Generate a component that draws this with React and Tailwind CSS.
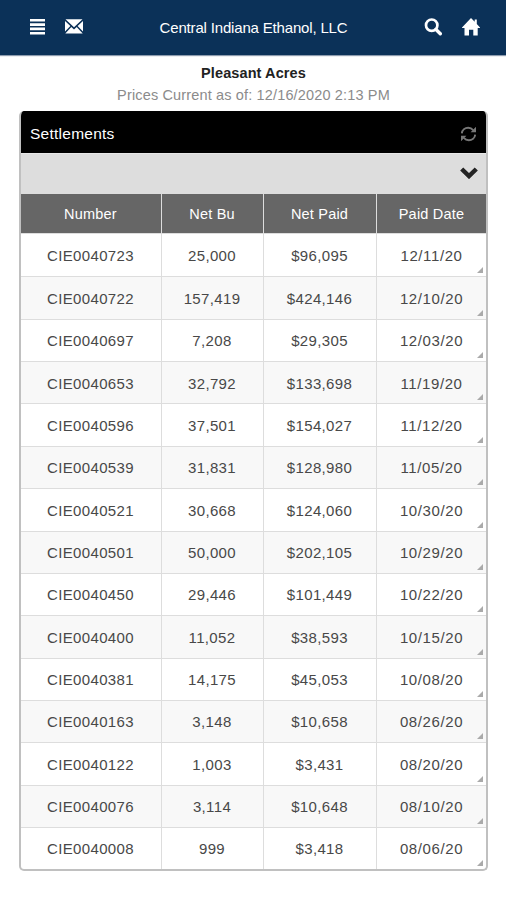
import React from "react";

const rows = [
  ["CIE0040723", "25,000", "$96,095", "12/11/20"],
  ["CIE0040722", "157,419", "$424,146", "12/10/20"],
  ["CIE0040697", "7,208", "$29,305", "12/03/20"],
  ["CIE0040653", "32,792", "$133,698", "11/19/20"],
  ["CIE0040596", "37,501", "$154,027", "11/12/20"],
  ["CIE0040539", "31,831", "$128,980", "11/05/20"],
  ["CIE0040521", "30,668", "$124,060", "10/30/20"],
  ["CIE0040501", "50,000", "$202,105", "10/29/20"],
  ["CIE0040450", "29,446", "$101,449", "10/22/20"],
  ["CIE0040400", "11,052", "$38,593", "10/15/20"],
  ["CIE0040381", "14,175", "$45,053", "10/08/20"],
  ["CIE0040163", "3,148", "$10,658", "08/26/20"],
  ["CIE0040122", "1,003", "$3,431", "08/20/20"],
  ["CIE0040076", "3,114", "$10,648", "08/10/20"],
  ["CIE0040008", "999", "$3,418", "08/06/20"],
];

const columns = "grid grid-cols-[141px_102px_113px_109px]";

function Header() {
  return (
    <header className="flex h-[55px] items-center bg-[#0b3158] pr-[26px] pl-[30px] text-white shadow-[0_1px_1px_#8c9bae]">
      <svg className="mb-0.5 h-4 w-[15px]" viewBox="0 0 15 16" fill="currentColor">
        <path d="M0 0h15v2.6H0zM0 4.3h15v2.6H0zM0 8.6h15v2.6H0zM0 12.9h15v2.6H0z" />
      </svg>
      <svg className="mb-0.5 ml-5 h-[15px] w-[18px]" viewBox="0 0 18 15" fill="currentColor">
        <path d="M.5.3h17L9 8.2zM0 2.1l5.4 5L0 12.4zM18 2.1l-5.4 5 5.4 5.3zM6.3 7.9L9 10.4l2.7-2.5 6 6.7H.3z" />
      </svg>
      <h1 className="flex-1 pt-[2px] text-center text-[15px] tracking-[-0.17px]">Central Indiana Ethanol, LLC</h1>
      <svg className="mb-[2px] h-[18px] w-[18px]" viewBox="0 0 18 18" fill="none" stroke="currentColor">
        <circle cx="7.7" cy="7.2" r="5.7" strokeWidth="2.7" />
        <path d="M12 11.5l4.3 4.3" strokeWidth="3.4" strokeLinecap="round" />
      </svg>
      <svg className="mb-[2px] ml-5 h-[18px] w-[18px]" viewBox="0 0 18 18" fill="currentColor">
        <path d="M9 0l3.7 3.8V1.6h2.1V6L18 9.4v.7h-2.3v7.5h-4.4v-5.9H7v5.9H2.5v-7.5H0v-.7z" />
      </svg>
    </header>
  );
}

function RefreshIcon() {
  return (
    <svg className="h-4 w-[17px] text-[#777]" viewBox="0 0 17 16" fill="none" stroke="currentColor" strokeWidth="1.9">
      <path d="M1.8 7.4C2.2 3.9 5 1.8 8.2 1.8c2.2 0 3.8.9 5 2.3M15.2 8.6c-.4 3.5-3.2 5.6-6.4 5.6-2.2 0-3.8-.9-5-2.3" />
      <path d="M16 .8v5.4h-5.4zM1 15.2V9.8h5.4z" fill="currentColor" stroke="none" />
    </svg>
  );
}

export default function App() {
  return (
    <div className="h-[900px] w-[506px] overflow-hidden bg-white font-['Liberation_Sans',Arial,sans-serif]">
      <Header />
      <div className="h-14 pt-[7px] pl-px text-center">
        <p className="text-[14.5px] leading-[22px] font-bold tracking-[0.1px] text-[#222]">Pleasant Acres</p>
        <p className="text-[14.5px] leading-[22px] tracking-[0.15px] text-[#8b8b8b]">Prices Current as of: 12/16/2020 2:13 PM</p>
      </div>
      <section className="ml-[19px] h-[760px] w-[469px] overflow-hidden rounded-[5px] border-2 border-t-0 border-[#c0c0c0] bg-white">
        <div className="relative -right-px -ml-0.5 flex h-[42px] items-center justify-between bg-black pt-[3px] pr-[10px] pl-[10px] text-white">
          <h2 className="text-[15.5px] tracking-[0.25px]">Settlements</h2>
          <RefreshIcon />
        </div>
        <div className="flex h-[41px] items-center justify-end border-t border-[#e8e8e8] bg-[#ddd] pr-2">
          <svg className="mb-[3px] h-3 w-[18px]" viewBox="0 0 18 12" fill="none" stroke="#242424" strokeWidth="4.4">
            <path d="M1.7 2L9 9.1 16.3 2" />
          </svg>
        </div>
        <div className={`${columns} h-10 border-b border-[#ddd] bg-[#666] text-white`}>
          {["Number", "Net Bu", "Net Paid", "Paid Date"].map((label) => (
            <div key={label} className="flex items-center justify-center border-r border-[#ddd] pt-[2px] pr-px text-[14.5px] tracking-[0.2px] last:border-r-0 last:pr-0">
              {label}
            </div>
          ))}
        </div>
        <div>
          {rows.map((row) => (
            <div key={row[0]} className={`${columns} h-[42.36px] border-t border-[#ddd] text-[#484848] first:border-t-0 even:bg-[#f8f8f8]`}>
              {row.map((value) => (
                <div key={value} className="group relative flex items-center justify-center border-r border-[#ddd] pt-[2px] pr-px text-[15px] tracking-[0.35px] last:border-r-0 last:pr-0 last:tracking-[0.6px]">
                  {value}
                  <svg className="absolute right-[3px] bottom-[3px] hidden h-1.5 w-1.5 group-last:block" viewBox="0 0 6 6" fill="#aaa">
                    <path d="M6 0v6H0z" />
                  </svg>
                </div>
              ))}
            </div>
          ))}
        </div>
      </section>
    </div>
  );
}
